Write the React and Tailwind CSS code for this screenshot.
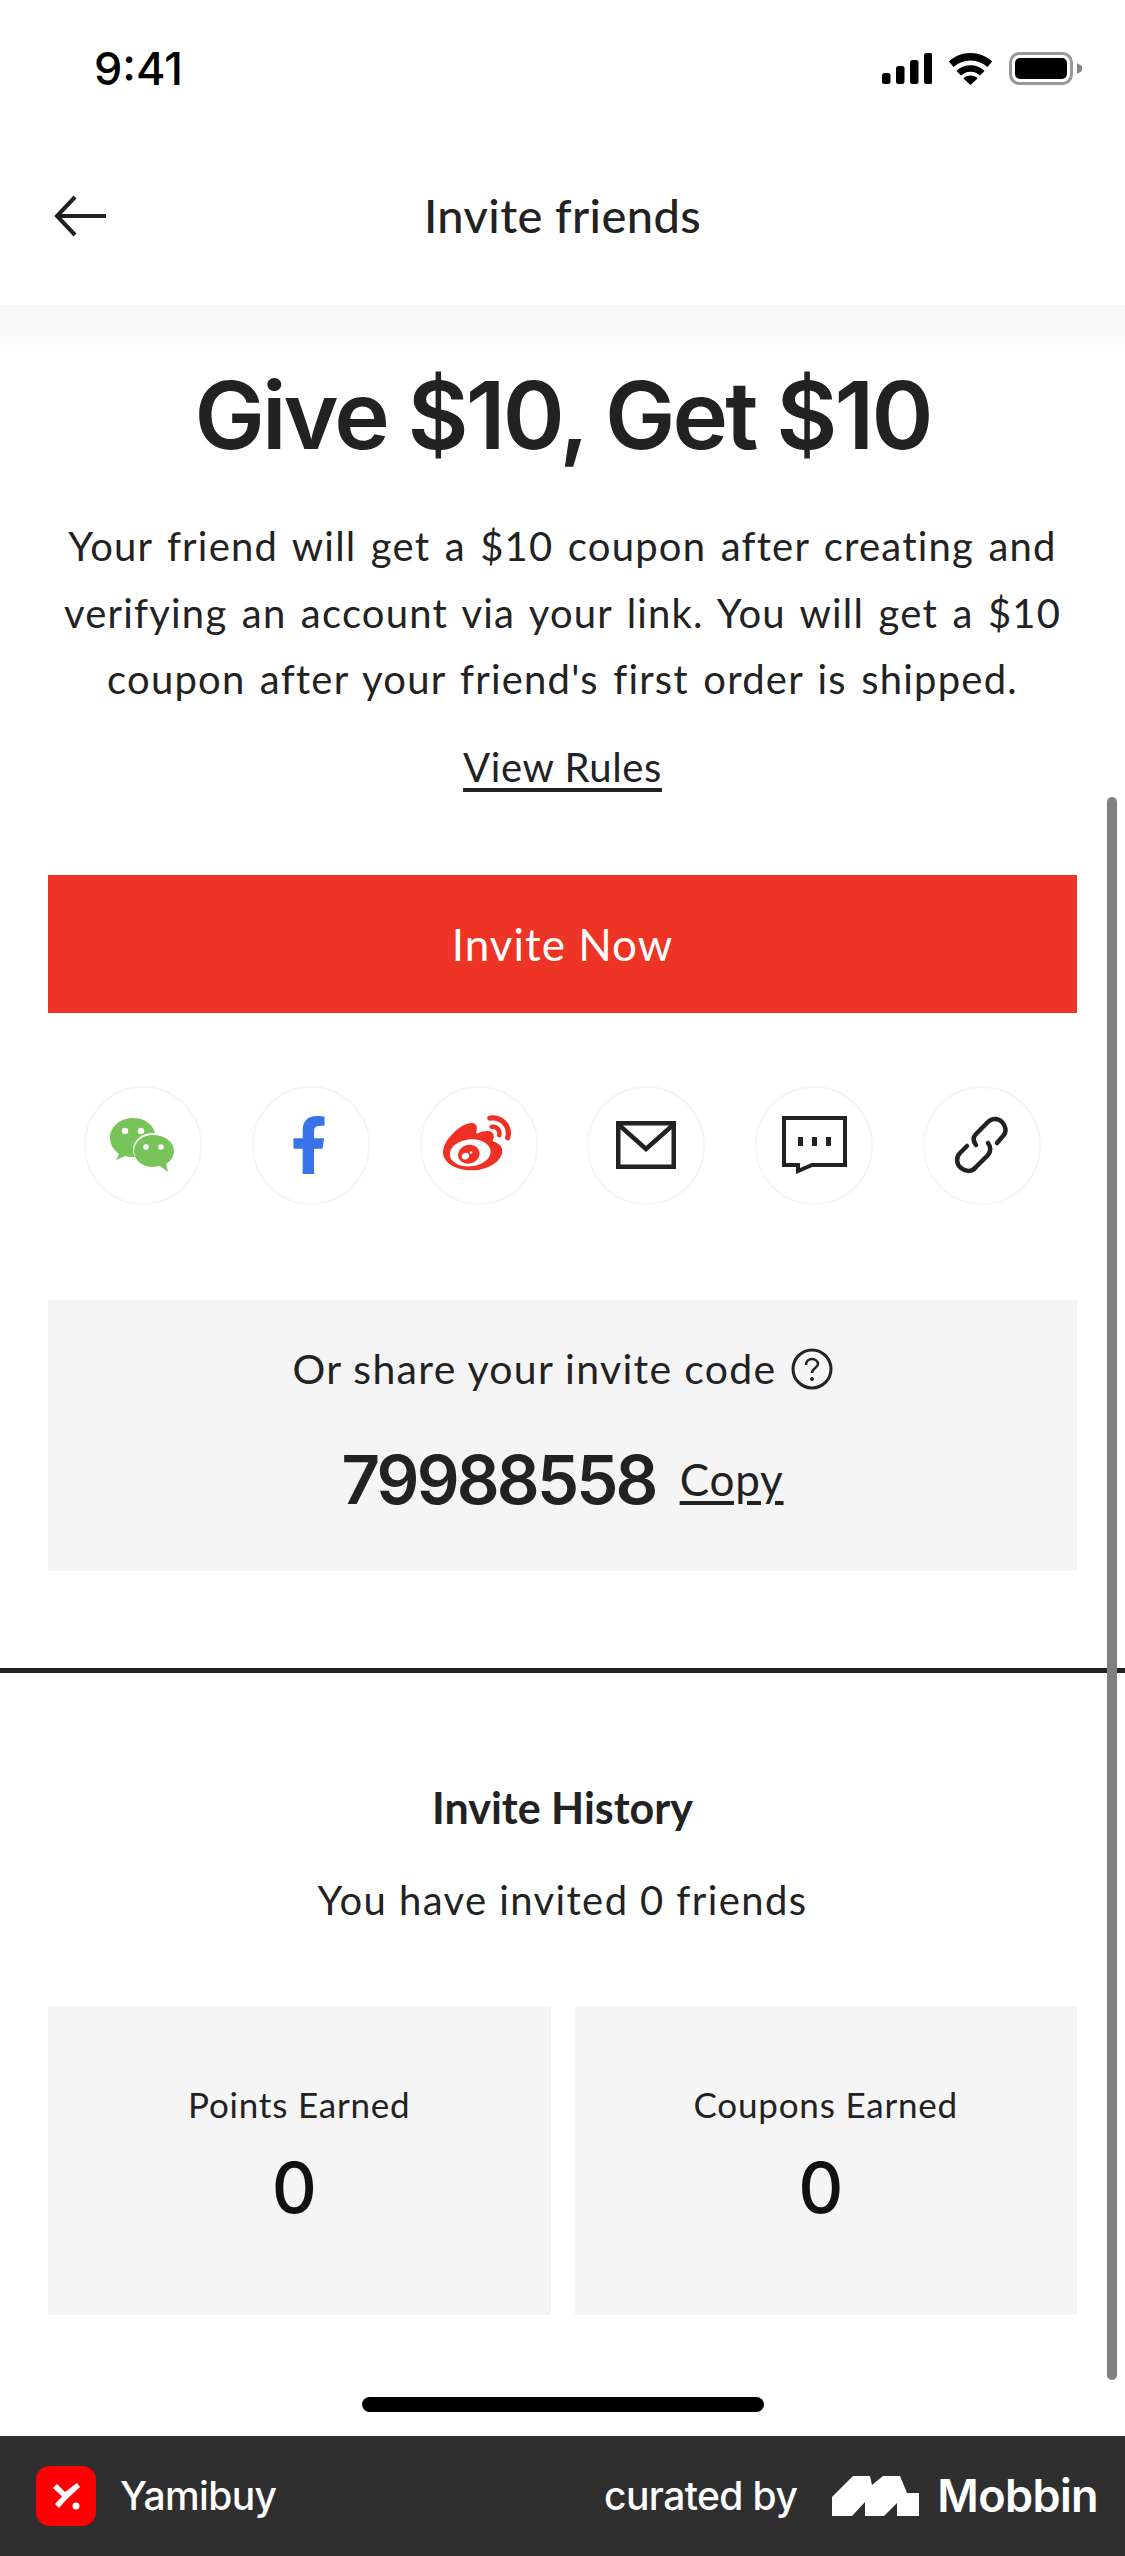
import React from 'react';
import { FaFacebookF, FaWeibo } from 'react-icons/fa';

const body = { fontFamily: 'Lato, sans-serif' };

const WeChatIcon = () => (
  <svg className="mr-[3px]" width="66" height="56" viewBox="0 0 66 56">
    <path d="M24 1C11 1 1 10 1 21c0 7 4 12 9 16l-3 6 9-4c3 1 5 1 8 1h2c-1-2-2-4-2-7 0-10 9-17 20-17h2C44 7 35 1 24 1z" fill="#78c45a" />
    <path d="M44 18c-11 0-19 7-19 16s8 16 19 16c2 0 5-1 7-1l8 6-2-8c5-3 8-8 8-13 0-9-9-16-21-16z" fill="#78c45a" />
    <circle cx="16" cy="14" r="3.2" fill="#fff" />
    <circle cx="32" cy="14" r="3.2" fill="#fff" />
    <circle cx="37" cy="30" r="2.8" fill="#fff" />
    <circle cx="52" cy="30" r="2.8" fill="#fff" />
  </svg>
);

const MailIcon = () => (
  <svg width="60" height="48" viewBox="0 0 60 48" fill="none" stroke="#222" strokeWidth="4.5">
    <rect x="2.25" y="2.25" width="55.5" height="43.5" />
    <path d="M3 4l27 24L57 4" />
  </svg>
);

const MessageIcon = () => (
  <svg width="65" height="58" viewBox="0 0 65 58" fill="none">
    <path d="M2 2h61v47H30l-14 6v-6H2z" stroke="#222" strokeWidth="4" />
    <rect x="16" y="21" width="5" height="9" fill="#222" />
    <rect x="30" y="21" width="5" height="9" fill="#222" />
    <rect x="44" y="21" width="5" height="9" fill="#222" />
  </svg>
);

const LinkIcon = () => (
  <svg width="60" height="60" viewBox="0 0 60 60" fill="none" stroke="#222" strokeWidth="4.5" strokeLinecap="round">
    <path d="M24 30c-3-4-3-8 0-11L36 7c4-4 10-4 14 0s5 10 1 14l-6 7" />
    <path d="M36 28c3 4 3 8 0 12L24 52c-4 5-10 5-15 1s-5-11-1-15l7-7" />
  </svg>
);

const shares = [
  { key: 'wechat', icon: <WeChatIcon /> },
  { key: 'facebook', icon: <FaFacebookF className="text-[#3874e8] text-[58px] mr-[3px]" /> },
  { key: 'weibo', icon: <FaWeibo className="text-[#ee3124] text-[68px] mr-[3px]" /> },
  { key: 'mail', icon: <MailIcon /> },
  { key: 'message', icon: <MessageIcon /> },
  { key: 'link', icon: <LinkIcon /> },
];

const StatCard = ({ label, value }) => (
  <div className="flex-1 h-[309px] bg-[#f5f5f5] flex flex-col items-center pt-[76px]">
    <div className="text-[35px] leading-[44px] tracking-[0.8px]">{label}</div>
    <div className="mt-[25px] mr-[10px] text-[70px] leading-[74px] font-medium text-[#111] font-['Inter']">{value}</div>
  </div>
);

const App = () => {
  return (
    <div className="relative w-[1125px] h-[2556px] bg-white flex flex-col text-[#222] overflow-hidden" style={body}>
      {/* status bar */}
      <div className="h-[140px] shrink-0 pl-[94px] pr-[43px] pt-[46px] flex justify-between items-start">
        <span className="text-[45px] leading-[46px] font-medium text-black font-['Inter']">9:41</span>
        <div className="flex items-center gap-[16px] mt-[6px]">
          <svg width="50" height="31" viewBox="0 0 50 31" fill="#000">
            <rect x="0" y="20" width="8.500" height="11" rx="2.500" />
            <rect x="14" y="13" width="8.500" height="18" rx="2.500" />
            <rect x="28" y="7" width="8.500" height="24" rx="2.500" />
            <rect x="42" y="0" width="8.500" height="31" rx="2.500" />
          </svg>
          <svg width="45" height="32" viewBox="0 0 46 34" fill="#000">
            <path d="M23 0C14 0 6 3.500 0 9l5 6C10 10.500 16 8 23 8s13 2.500 18 7l5-6C40 3.500 32 0 23 0z" />
            <path d="M23 13c-6 0-11 2-15 6l5 5c2.500-2.500 6-4 10-4s7.500 1.500 10 4l5-5c-4-4-9-6-15-6z" />
            <path d="M23 24c-3 0-5.500 1-7.500 3L23 34l7.500-7c-2-2-4.500-3-7.500-3z" />
          </svg>
          <svg width="73" height="33" viewBox="0 0 73 33" fill="none">
            <rect x="1.500" y="1.500" width="61" height="30" rx="9" stroke="#999" strokeWidth="3" />
            <rect x="6" y="6" width="52" height="21" rx="5" fill="#000" />
            <path d="M68 11l5 3v5l-5 3z" fill="#888" />
          </svg>
        </div>
      </div>

      {/* header */}
      <div className="h-[165px] shrink-0 relative flex items-center justify-center">
        <svg className="absolute left-[54px] top-[55px]" width="52" height="42" viewBox="0 0 52 42" fill="none" stroke="#222" strokeWidth="4">
          <path d="M52 21H3" />
          <path d="M21 2L3 21l18 19" />
        </svg>
        <h1 className="text-[47px] leading-[52px] font-medium pb-[16px] tracking-[0.4px]">Invite friends</h1>
      </div>
      <div className="h-[55px] shrink-0 bg-gradient-to-b from-[#f6f6f6] to-white"></div>

      {/* invite section */}
      <div className="flex flex-col items-center px-[48px] pt-[5px]">
        <h2 className="text-[94px] leading-[100px] font-semibold tracking-[-2.900px] font-['Inter']">Give $10, Get $10</h2>
        <p className="mt-[48px] text-center text-[40px] leading-[66.500px] tracking-[1.2px] [word-spacing:3px] w-[1060px]">
          Your friend will get a $10 coupon after creating and verifying an account via your link. You will get a $10 coupon after your friend's first order is shipped.
        </p>
        <a className="mt-[31px] text-[40px] leading-[46px] underline underline-offset-[6px] tracking-[0.6px]">View Rules</a>

        <button className="mt-[85px] w-full h-[138px] bg-[#ee3424] text-white text-[44px] tracking-[1px]">Invite Now</button>

        <div className="mt-[73px] w-full px-[36px] flex justify-between">
          {shares.map((s) => (
            <div key={s.key} className="w-[118px] h-[119px] rounded-full border-2 border-[#f5f5f5] flex items-center justify-center">
              {s.icon}
            </div>
          ))}
        </div>

        <div className="mt-[95px] w-full h-[271px] bg-[#f5f5f5] flex flex-col items-center pt-[44px]">
          <div className="flex items-center gap-[14px] text-[41px] leading-[50px] tracking-[1.3px]">
            <span>Or share your invite code</span>
            <svg width="42" height="42" viewBox="0 0 42 42" fill="none" stroke="#222" strokeWidth="3">
              <circle cx="21" cy="21" r="19" />
              <path d="M15 17c0-4 3-6 6-6s6 2 6 5c0 4-6 4-6 9" strokeWidth="2.500" />
              <circle cx="21" cy="31" r="1.500" fill="#222" strokeWidth="1" />
            </svg>
          </div>
          <div className="mt-[47px] flex items-end gap-[24px]">
            <span className="text-[67px] leading-[78px] font-semibold font-['Inter'] tracking-[-2.800px]">79988558</span>
            <a className="mb-[10px] text-[44px] leading-[60px] underline underline-offset-[5px] tracking-[0.8px]">Copy</a>
          </div>
        </div>
      </div>

      <div className="mt-[97px] h-[5px] shrink-0 bg-[#222]"></div>

      {/* history section */}
      <div className="flex flex-col items-center px-[48px]">
        <h3 className="mt-[109px] text-[43px] leading-[52px] font-bold">Invite History</h3>
        <p className="mt-[42px] text-[40px] leading-[48px] tracking-[1.4px]">You have invited 0 friends</p>
        <div className="mt-[82px] w-full flex gap-[24px]">
          <StatCard label="Points Earned" value="0" />
          <StatCard label="Coupons Earned" value="0" />
        </div>
      </div>

      {/* home indicator */}
      <div className="mt-auto h-[39px] shrink-0 flex justify-center">
        <div className="w-[402px] h-[15px] rounded-full bg-black"></div>
      </div>

      {/* mobbin footer */}
      <div className="h-[120px] shrink-0 bg-[#2f2f2f] flex items-center justify-between pl-[36px] pr-[27px] text-white font-['Inter'] font-medium">
        <div className="flex items-center gap-[24px]">
          <svg width="60" height="60" viewBox="0 0 60 60">
            <rect width="60" height="60" rx="14" fill="#ff0000" />
            <path d="M17 22l4-4 8 8 12-9 3 4-13 12-8 9-4-4 7-7.500z" fill="#fff" />
            <circle cx="40" cy="40" r="3.500" fill="#fff" />
          </svg>
          <span className="text-[39px] tracking-[-0.6px]">Yamibuy</span>
        </div>
        <div className="flex items-center">
          <span className="text-[39px] tracking-[-0.6px]">curated by</span>
          <svg className="ml-[35px]" width="87" height="40" viewBox="0 0 87 40" fill="#fff">
            <path d="M0 21L21 0h17l2 9L51 0h17l7 17h12v23H65V27L52 40H33V26L20 40H0z" />
          </svg>
          <span className="ml-[18px] text-[45px] font-semibold tracking-[-0.6px]">Mobbin</span>
        </div>
      </div>

      {/* scroll indicator */}
      <div className="absolute left-[1107px] top-[797px] w-[10px] h-[1583px] rounded-full bg-[#808080]"></div>
    </div>
  );
};

export default App;
